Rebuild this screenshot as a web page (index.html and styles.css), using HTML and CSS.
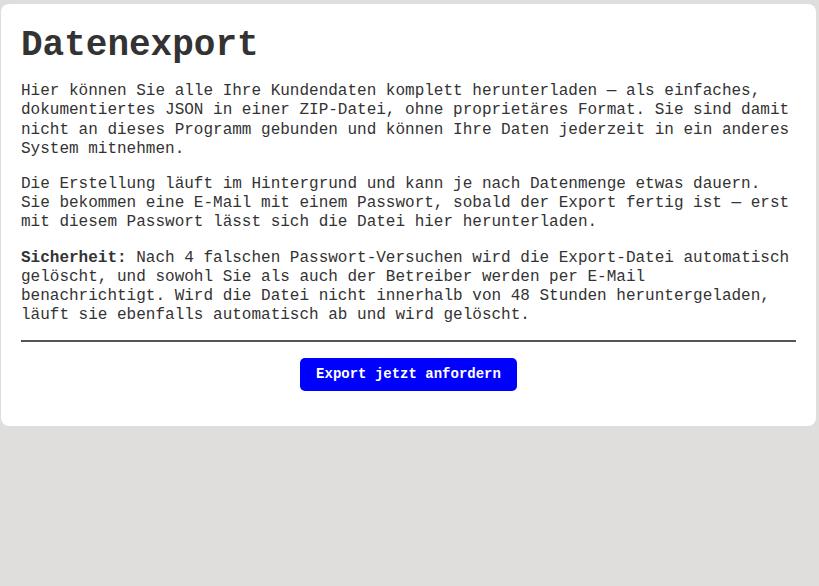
FILE: index.html
```html
<!DOCTYPE html>
<html lang="de">
<head>
<meta charset="utf-8">
<title>Datenexport</title>
<link rel="stylesheet" href="styles.css">
</head>
<body>
<main class="card">
  <h1 class="title">Datenexport</h1>
  <p class="text">Hier können Sie alle Ihre Kundendaten komplett herunterladen — als einfaches, dokumentiertes JSON in einer ZIP-Datei, ohne proprietäres Format. Sie sind damit nicht an dieses Programm gebunden und können Ihre Daten jederzeit in ein anderes System mitnehmen.</p>
  <p class="text">Die Erstellung läuft im Hintergrund und kann je nach Datenmenge etwas dauern. Sie bekommen eine E-Mail mit einem Passwort, sobald der Export fertig ist — erst mit diesem Passwort lässt sich die Datei hier herunterladen.</p>
  <p class="text text-last"><strong>Sicherheit:</strong> Nach 4 falschen Passwort-Versuchen wird die Export-Datei automatisch gelöscht, und sowohl Sie als auch der Betreiber werden per E-Mail benachrichtigt. Wird die Datei nicht innerhalb von 48 Stunden heruntergeladen, läuft sie ebenfalls automatisch ab und wird gelöscht.</p>
  <hr class="divider">
  <div class="actions">
    <button class="btn" type="button">Export jetzt anfordern</button>
  </div>
</main>
</body>
</html>
```
FILE: styles.css
```css
html, body {
  margin: 0;
  padding: 0;
}
body {
  background: #dfdedc;
  font-family: "Liberation Mono", "DejaVu Sans Mono", monospace;
  color: #333333;
  padding: 4px 3px 0 1px;
}
.card {
  background: #ffffff;
  border-radius: 8px;
  padding: 20px;
  width: 775px;
}
.title {
  font-size: 36px;
  line-height: 1.2;
  font-weight: bold;
  margin: 0 0 15px 0;
  color: #333333;
}
.text {
  font-size: 16px;
  line-height: 1.2;
  margin: 0 0 16px 0;
}
.text-last {
  margin-bottom: 15px;
}
.text strong {
  font-weight: bold;
}
.divider {
  border: 0;
  height: 2px;
  background: #555555;
  margin: 0 0 16px 0;
}
.actions {
  display: flex;
  justify-content: center;
  padding-bottom: 15px;
}
.btn {
  font-family: "Liberation Mono", "DejaVu Sans Mono", monospace;
  font-size: 14px;
  font-weight: bold;
  color: #ffffff;
  background: #0000ff;
  border: 0;
  border-radius: 5px;
  padding: 0 16px;
  height: 33px;
  line-height: 33px;
}
```
